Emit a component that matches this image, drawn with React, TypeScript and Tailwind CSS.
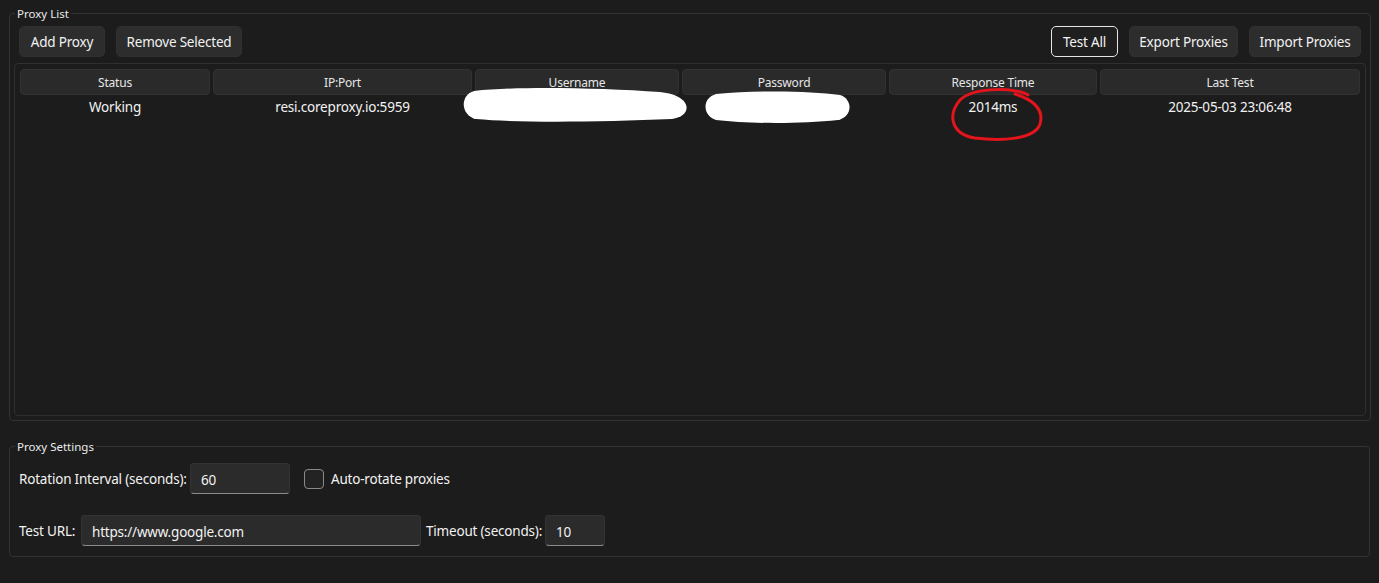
import { useState } from "react";

type ProxyRow = {
  status: string;
  address: string;
  username: string;
  password: string;
  responseTime: string;
  lastTest: string;
};

const columns = ["Status", "IP:Port", "Username", "Password", "Response Time", "Last Test"];

const proxies: ProxyRow[] = [
  {
    status: "Working",
    address: "resi.coreproxy.io:5959",
    username: "",
    password: "",
    responseTime: "2014ms",
    lastTest: "2025-05-03 23:06:48",
  },
];

function ToolButton({ label, width, focused }: { label: string; width: string; focused?: boolean }) {
  return (
    <button
      className={`h-[31px] ${width} whitespace-nowrap rounded-[5px] pt-[2px] text-[13.5px] tracking-[-0.2px] text-[#f2f2f2] ${
        focused ? "border border-[#e6e6e6] bg-[#1f1f1f]" : "border border-[#303030] bg-[#2d2d2d]"
      }`}
    >
      {label}
    </button>
  );
}

function TextBox({ value, width }: { value: string; width: string }) {
  return (
    <input
      defaultValue={value}
      className={`h-[31px] ${width} rounded-[4px] border border-[#333333] border-b-[#8c8c8c] bg-[#2b2b2b] px-[10px] pt-[2px] text-[13.5px] tracking-[-0.2px] text-[#f2f2f2] outline-none`}
    />
  );
}

export default function App() {
  const [autoRotate, setAutoRotate] = useState(false);

  return (
    <div
      className="relative h-[583px] w-[1379px] overflow-hidden bg-[#1c1c1c] px-[9px] pt-[6px] text-[#f2f2f2]"
      style={{ fontFamily: '"Noto Sans", "Open Sans", sans-serif' }}
    >
      <fieldset className="h-[415px] rounded-[4px] border border-[#333333] px-[4px]">
        <legend className="ml-[1px] px-[2px] text-[11.5px] leading-[15px] text-[#ebebeb]">Proxy List</legend>

        <div className="mt-[5px] flex items-center px-[5px]">
          <div className="flex gap-[11px]">
            <ToolButton label="Add Proxy" width="w-[86px]" />
            <ToolButton label="Remove Selected" width="w-[126px]" />
          </div>
          <div className="ml-auto flex gap-[11px]">
            <ToolButton label="Test All" width="w-[67px]" focused />
            <ToolButton label="Export Proxies" width="w-[109px]" />
            <ToolButton label="Import Proxies" width="w-[112px]" />
          </div>
        </div>

        <div className="mt-[6px] h-[353px] rounded-[4px] border border-[#2f2f2f] px-[5px] pt-[5px]">
          <div className="grid grid-cols-[190px_259px_204px_204px_208px_260px] gap-x-[3px]">
            {columns.map((c) => (
              <div
                key={c}
                className="flex h-[26px] items-center justify-center rounded-[4px] border border-[#313131] bg-[#2a2a2a] pt-[1px] text-[12px] tracking-[-0.2px] text-[#e6e6e6]"
              >
                {c}
              </div>
            ))}
            {proxies.map((p) => (
              <div key={p.address} className="contents text-[13.5px] tracking-[-0.2px]">
                <div className="flex h-[24px] items-center justify-center">{p.status}</div>
                <div className="flex h-[24px] items-center justify-center">{p.address}</div>
                <div className="flex h-[24px] items-center justify-center">{p.username}</div>
                <div className="flex h-[24px] items-center justify-center">{p.password}</div>
                <div className="flex h-[24px] items-center justify-center">{p.responseTime}</div>
                <div className="flex h-[24px] items-center justify-center">{p.lastTest}</div>
              </div>
            ))}
          </div>
        </div>
      </fieldset>

      <fieldset className="mt-[18px] h-[118px] rounded-[4px] border border-[#333333] px-[9px]">
        <legend className="ml-[-4px] px-[2px] text-[11.5px] leading-[15px] text-[#ebebeb]">Proxy Settings</legend>

        <div className="mt-[9px] flex items-center text-[13.5px] tracking-[-0.2px]">
          <span className="w-[171px] whitespace-nowrap pt-[2px]">Rotation Interval (seconds):</span>
          <TextBox value="60" width="w-[100px]" />
          <label className="ml-[14px] flex items-center gap-[7px]">
            <button
              onClick={() => setAutoRotate(!autoRotate)}
              className="h-[20px] w-[20px] rounded-[4px] border border-[#8a8a8a] bg-[#232323]"
            >
              {autoRotate ? "✓" : ""}
            </button>
            <span className="pt-[2px]">Auto-rotate proxies</span>
          </label>
        </div>

        <div className="mt-[21px] flex items-center text-[13.5px] tracking-[-0.2px]">
          <span className="w-[62px] whitespace-nowrap pt-[2px]">Test URL:</span>
          <TextBox value="https://www.google.com" width="w-[340px]" />
          <span className="ml-[5px] w-[119px] whitespace-nowrap pt-[2px]">Timeout (seconds):</span>
          <TextBox value="10" width="w-[60px]" />
        </div>
      </fieldset>

      {/* scribbles over the credentials and the highlighted response time */}
      <svg className="pointer-events-none absolute inset-0" width="1379" height="583">
        <path
          d="M474 91 C520 86 600 88 660 92 C692 95 694 116 672 119 C600 122 520 123 476 119 C460 115 460 95 474 91 Z"
          fill="#ffffff"
        />
        <path
          d="M716 94 C760 90 810 91 840 95 C853 99 853 117 838 120 C800 124 750 124 716 120 C702 115 702 98 716 94 Z"
          fill="#ffffff"
        />
        <path
          d="M1028 95 C1018 88 975 86 960 100 C948 114 950 134 975 138 C1000 141 1035 140 1040 124 C1044 110 1034 100 1015 94"
          fill="none"
          stroke="#e3141b"
          strokeWidth="3"
          strokeLinecap="round"
        />
      </svg>
    </div>
  );
}
